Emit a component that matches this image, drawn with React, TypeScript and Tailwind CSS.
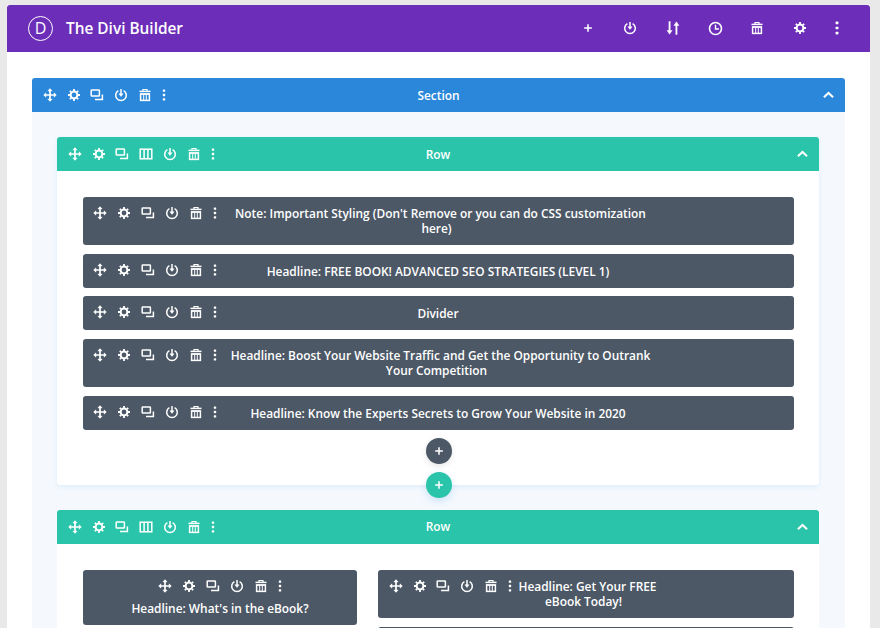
import React from "react";

type IconProps = { size?: number };

const Svg = ({ size = 14, children }: IconProps & { children: React.ReactNode }) => (
  <svg width={size} height={size} viewBox="0 0 14 14" fill="none" stroke="white" strokeWidth="1.5" aria-hidden>
    {children}
  </svg>
);

const MoveIcon = ({ size }: IconProps) => (
  <Svg size={size}>
    <path d="M7 1.5v11M1.5 7h11" strokeWidth="1.7" />
    <path d="M4.8 3 7 .6 9.2 3zM4.8 11 7 13.4 9.2 11zM3 4.8.6 7 3 9.2zM11 4.8 13.4 7 11 9.2z" fill="white" stroke="white" strokeWidth="0.4" />
  </Svg>
);

const GearIcon = ({ size }: IconProps) => (
  <Svg size={size}>
    <circle cx="7" cy="7" r="3.4" strokeWidth="2" />
    <path d="M7 1v2M7 11v2M1 7h2M11 7h2M2.8 2.8l1.4 1.4M9.8 9.8l1.4 1.4M2.8 11.2l1.4-1.4M9.8 4.2l1.4-1.4" strokeWidth="1.8" />
  </Svg>
);

const CopyIcon = ({ size }: IconProps) => (
  <Svg size={size}>
    <rect x="1.2" y="2" width="8.2" height="6" rx="0.6" />
    <path d="M12.4 6.5v5H5" />
  </Svg>
);

const PowerIcon = ({ size }: IconProps) => (
  <Svg size={size}>
    <path d="M4.4 2.6a5.3 5.3 0 1 0 5.2 0" />
    <path d="M7 1v6.5" />
    <path d="M4.9 5.8 7 8.4l2.1-2.6z" fill="white" strokeWidth="0.5" />
  </Svg>
);

const TrashIcon = ({ size }: IconProps) => (
  <Svg size={size}>
    <path d="M1.5 3.4h11" />
    <path d="M5 3V1.5h4V3" strokeWidth="1.2" />
    <rect x="2.6" y="6" width="8.8" height="6.4" />
    <path d="M5.7 6.5v5.5M8.3 6.5v5.5" strokeWidth="1" />
    <path d="M2 6h10" strokeWidth="1.2" />
  </Svg>
);

const DotsIcon = ({ size }: IconProps) => (
  <svg width={size ?? 14} height={size ?? 14} viewBox="0 0 14 14" fill="white" aria-hidden>
    <rect x="5.8" y="1.4" width="2.4" height="2.4" rx="0.6" />
    <rect x="5.8" y="5.8" width="2.4" height="2.4" rx="0.6" />
    <rect x="5.8" y="10.2" width="2.4" height="2.4" rx="0.6" />
  </svg>
);

const ColumnsIcon = ({ size }: IconProps) => (
  <Svg size={size}>
    <rect x="1.2" y="2.2" width="11.6" height="9.6" />
    <path d="M5.1 2.5v9M8.9 2.5v9" />
  </Svg>
);

const PlusIcon = ({ size = 14 }: IconProps) => (
  <Svg size={size}>
    <path d="M7 2.5v9M2.5 7h9" strokeWidth="1.8" />
  </Svg>
);

const SortIcon = () => (
  <Svg size={16}>
    <path d="M4 1v9.5M10 3.5V13" strokeWidth="1.6" />
    <path d="M1.8 9.2 4 12.4l2.2-3.2zM7.8 4.8 10 1.6l2.2 3.2z" fill="white" strokeWidth="0.4" />
  </Svg>
);

const ClockIcon = () => (
  <Svg size={15}>
    <circle cx="7" cy="7" r="5.6" />
    <path d="M7 3.6V7.4h3.2" strokeWidth="1.3" />
  </Svg>
);

const ChevronIcon = () => (
  <svg width="11" height="8" viewBox="0 0 12 8" fill="none" stroke="white" strokeWidth="2.2" aria-hidden>
    <path d="M1 6.5 6 1.8l5 4.7" />
  </svg>
);

const Btn = ({ children, w }: { children: React.ReactNode; w: string }) => (
  <span className={`${w} flex items-center justify-center shrink-0`}>{children}</span>
);

// same toolbar for section, row and module, row gets the columns icon
const Actions = ({ columns, w = "w-[24px]" }: { columns?: boolean; w?: string }) => (
  <div className="flex items-center">
    <Btn w={w}><MoveIcon /></Btn>
    <Btn w={w}><GearIcon /></Btn>
    <Btn w={w}><CopyIcon /></Btn>
    {columns && <Btn w={w}><ColumnsIcon /></Btn>}
    <Btn w={w}><PowerIcon /></Btn>
    <Btn w={w}><TrashIcon /></Btn>
    <Btn w="w-[14px]"><DotsIcon /></Btn>
  </div>
);

const Bar = ({ title, color, columns }: { title: string; color: string; columns?: boolean }) => (
  <div className={`${color} h-[34px] rounded-t-[3px] grid grid-cols-[1fr_auto_1fr] items-center px-[6px]`}>
    <Actions columns={columns} w="w-[23.8px]" />
    <span className="text-white text-[11.9px] font-semibold pt-[1px]">{title}</span>
    <span className="flex justify-end pr-[5px]"><ChevronIcon /></span>
  </div>
);

const SingleModule = ({ title }: { title: string }) => (
  <div className="bg-[#4c5866] rounded-[3px] flex items-start pt-[9px] pl-[5px] pr-[144px] shrink-0 h-[34px]">
    <div className="w-[138px] shrink-0">
      <Actions />
    </div>
    <p className="flex-1 text-center text-white text-[11.9px] font-semibold leading-[15px] pt-[1px]">{title}</p>
  </div>
);

// two line titles wrap around the floated toolbar, so the first line sits a bit to the right
const WrapModule = ({ title }: { title: string }) => (
  <div className="bg-[#4c5866] rounded-[3px] pt-[9px] pl-[135px] pr-[139px] shrink-0 h-[48.3px] text-center text-white text-[11.9px] font-semibold leading-[15px]">
    <div className="float-left -ml-[130px] w-[138px]">
      <Actions />
    </div>
    {title}
  </div>
);

export default function App() {
  return (
    <div className="h-[628px] w-[880px] overflow-hidden bg-[#e9e9e9] pl-[7px] pr-[10px] pt-[5px] font-['Open_Sans',sans-serif]">
      <div className="bg-white h-full">
        <header className="h-[47px] bg-[#6c2eb9] rounded-t-[3px] flex items-center pl-[21px] pr-[17px] pb-[1px]">
          <div className="w-[25px] h-[25px] rounded-full border-[1.5px] border-white flex items-center justify-center text-white text-[16px]">D</div>
          <h1 className="ml-[13px] pt-[1px] text-white text-[15.4px] font-semibold">The Divi Builder</h1>
          <div className="ml-auto flex items-center">
            <span className="w-[14px] flex justify-center"><PlusIcon size={12} /></span>
            <span className="w-[42.4px] ml-[14px] flex justify-center"><PowerIcon /></span>
            <span className="w-[42.4px] flex justify-center"><SortIcon /></span>
            <span className="w-[42.4px] flex justify-center"><ClockIcon /></span>
            <span className="w-[42.4px] flex justify-center"><TrashIcon /></span>
            <span className="w-[42.4px] flex justify-center"><GearIcon /></span>
            <span className="w-[32px] flex justify-center"><DotsIcon size={16} /></span>
          </div>
        </header>

        <section className="mt-[26px] mx-[25px]">
          <Bar title="Section" color="bg-[#2b87da]" />
          <div className="bg-[#f5f9fd] pl-[25px] pr-[26px] pt-[25px] h-[600px]">
            <div className="bg-white rounded-b-[3px] shadow-[0_2px_5px_rgba(43,135,218,0.1)] relative">
              <Bar title="Row" color="bg-[#29c4a9]" columns />
              <div className="pl-[26px] pr-[25px] pt-[26px] pb-[55px] flex flex-col gap-[8.5px]">
                <WrapModule title="Note: Important Styling (Don't Remove or you can do CSS customization here)" />
                <SingleModule title="Headline: FREE BOOK! ADVANCED SEO STRATEGIES (LEVEL 1)" />
                <SingleModule title="Divider" />
                <WrapModule title="Headline: Boost Your Website Traffic and Get the Opportunity to Outrank Your Competition" />
                <SingleModule title="Headline: Know the Experts Secrets to Grow Your Website in 2020" />
              </div>
              <button className="absolute left-[369px] bottom-[21px] w-[26px] h-[26px] rounded-full bg-[#4c5866] flex items-center justify-center shadow-[0_2px_6px_rgba(0,0,0,0.1)]">
                <PlusIcon size={12} />
              </button>
              <button className="absolute left-[369px] -bottom-[13px] w-[26px] h-[26px] rounded-full bg-[#29c4a9] flex items-center justify-center shadow-[0_3px_8px_rgba(43,135,218,0.2)]">
                <PlusIcon size={12} />
              </button>
            </div>

            <div className="mt-[25px] bg-white rounded-b-[3px]">
              <Bar title="Row" color="bg-[#29c4a9]" columns />
              <div className="pl-[26px] pr-[25px] pt-[26px] flex gap-[21px] items-start">
                <div className="w-[274px] h-[55px] bg-[#4c5866] rounded-[3px] pt-[9px] flex flex-col items-center shrink-0">
                  <Actions w="w-[24px]" />
                  <p className="mt-[8px] text-white text-[11.9px] font-semibold leading-[15px]">Headline: What's in the eBook?</p>
                </div>
                <div className="flex-1 flex flex-col gap-[9px]">
                  <div className="h-[48px] bg-[#4c5866] rounded-[3px] pt-[9px] pl-[130px] pr-[135px] text-center text-white text-[11.9px] font-semibold leading-[15px]">
                    <div className="float-left -ml-[124px] w-[132px]">
                      <Actions w="w-[23.8px]" />
                    </div>
                    Headline: Get Your FREE eBook Today!
                  </div>
                  <div className="h-[48px] bg-[#4c5866] rounded-[3px]" />
                </div>
              </div>
            </div>
          </div>
        </section>
      </div>
    </div>
  );
}
